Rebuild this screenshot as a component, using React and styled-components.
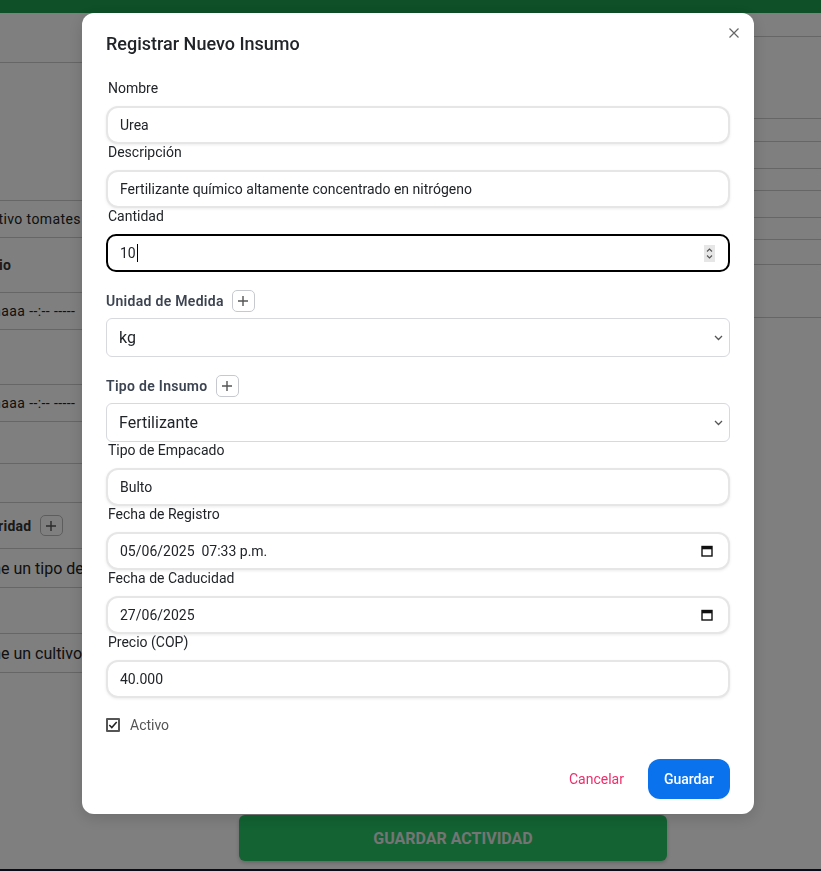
import React from "react";
import styled, { createGlobalStyle, css } from "styled-components";

const GlobalStyle = createGlobalStyle`
  html, body { margin: 0; padding: 0; }
  body {
    width: 821px;
    height: 871px;
    overflow: hidden;
    background: #ffffff;
    font-family: Roboto, "Liberation Sans", Arial, sans-serif;
  }
  * { box-sizing: border-box; }
`;

/* ---------- background page ---------- */
const BgPage = styled.div`
  display: flex;
  flex-direction: column;
  height: 871px;
  overflow: hidden;
`;
const TopBar = styled.div`
  flex: none;
  height: 13px;
  background: #1ea050;
`;
const Main = styled.div`
  flex: none;
  height: 802px;
  display: flex;
  justify-content: space-between;
`;
const BgColumn = styled.div`
  width: 360px;
  display: flex;
  flex-direction: column;
`;
const BgHeader = styled.div`
  height: 50px;
  border-bottom: 1px solid #cccccc;
  margin-bottom: ${(p) => p.$gap || 0}px;
`;
const BgInput = styled.div`
  height: ${(p) => p.$h || 38}px;
  margin-left: ${(p) => p.$shift}px;
  width: 420px;
  border: 1px solid #cccccc;
  border-radius: 4px;
  display: flex;
  align-items: center;
  padding: 0 12px;
  font-size: ${(p) => (p.$big ? 16 : 14)}px;
  letter-spacing: ${(p) => (p.$big ? 0 : 0.4)}px;
  color: #222;
  white-space: nowrap;
`;
const BgLabel = styled.div`
  height: ${(p) => p.$h}px;
  margin-left: ${(p) => p.$shift}px;
  display: flex;
  align-items: center;
  gap: 8px;
  font-size: 14px;
  font-weight: 700;
  letter-spacing: 0.3px;
  color: #333;
  white-space: nowrap;
`;
const BgPlus = styled.span`
  width: 23px;
  height: 21px;
  border: 1px solid #bbb;
  border-radius: 5px;
  display: flex;
  align-items: center;
  justify-content: center;
`;
const BgRow = styled.div`
  height: ${(p) => p.$h}px;
  border-bottom: 1px solid #cccccc;
`;
const BgFooter = styled.div`
  flex: none;
  padding-left: 239px;
`;
const BgButton = styled.div`
  width: 428px;
  height: 46px;
  border-radius: 6px;
  background: #26c666;
  color: #eaeaea;
  font-size: 16px;
  font-weight: 700;
  display: flex;
  align-items: center;
  justify-content: center;
  box-shadow: 0 2px 4px rgba(0, 0, 0, 0.2);
`;
const BgBottom = styled.div`
  margin-top: 8px;
  flex: 1;
  background: #141432;
`;

/* ---------- modal ---------- */
const Overlay = styled.div`
  position: fixed;
  inset: 0;
  background: rgba(0, 0, 0, 0.5);
  display: flex;
  align-items: flex-start;
  padding: 13px 0 0 82px;
`;
const Modal = styled.div`
  width: 672px;
  height: 801px;
  background: #ffffff;
  border-radius: 12px;
  display: flex;
  flex-direction: column;
  box-shadow: 0 4px 16px rgba(0, 0, 0, 0.15);
`;
const Header = styled.div`
  display: flex;
  justify-content: space-between;
  align-items: flex-start;
  padding: 10px 10px 0 24px;
`;
const Title = styled.h2`
  margin: 9px 0 0;
  font-size: 18px;
  line-height: 24px;
  font-weight: 500;
  color: #212529;
`;
const CloseButton = styled.button`
  width: 20px;
  height: 20px;
  padding: 0;
  border: none;
  background: transparent;
  display: flex;
  align-items: center;
  justify-content: center;
`;
const Body = styled.div`
  flex: 1;
  display: flex;
  flex-direction: column;
  padding: 24px 24px 15px;
`;
const Field = styled.div`
  display: flex;
  flex-direction: column;
  margin-top: ${(p) => p.$mt || 0}px;
`;
const Label = styled.label`
  font-size: 14px;
  line-height: 17px;
  margin: 0 0 9px 2px;
  color: #212529;
`;
const LabelRow = styled.div`
  display: flex;
  align-items: center;
  gap: 8px;
  height: 22px;
  margin-bottom: 6px;
`;
const StrongLabel = styled.label`
  font-size: 14px;
  font-weight: 600;
  letter-spacing: 0.3px;
  color: #3d4451;
`;
const AddButton = styled.button`
  width: 23px;
  height: 22px;
  padding: 0;
  border: 1px solid #c6cad0;
  border-radius: 5px;
  background: #fff;
  display: flex;
  align-items: center;
  justify-content: center;
`;
const InputShell = styled.div`
  height: 38px;
  display: flex;
  align-items: center;
  gap: 8px;
  padding: 0 ${(p) => p.$pr || 12}px 0 12px;
  border: 2px solid #e6e6e6;
  border-radius: 12px;
  box-shadow: 0 1px 3px rgba(0, 0, 0, 0.08);
  background: #fff;
  ${(p) =>
    p.$focused &&
    css`
      border-color: #000;
      border-radius: 10px;
      box-shadow: none;
    `}
`;
const TextInput = styled.input`
  flex: 1;
  min-width: 0;
  border: none;
  outline: none;
  padding: 0;
  background: transparent;
  font-family: inherit;
  font-size: 14px;
  color: #212529;
`;
const TypedValue = styled.span`
  flex: 1;
  display: flex;
  align-items: center;
  font-size: 14px;
  color: #212529;
`;
const Caret = styled.span`
  width: 1px;
  height: 18px;
  background: #000;
  margin-left: 1px;
`;
const SelectShell = styled.div`
  height: 39px;
  display: flex;
  align-items: center;
  padding: 0 6px 0 12px;
  border: 1px solid #d6d9de;
  border-radius: 6px;
  background: #fff;
`;
const Select = styled.select`
  flex: 1;
  appearance: none;
  border: none;
  outline: none;
  padding: 0;
  background: transparent;
  font-family: inherit;
  font-size: 16px;
  color: #212529;
`;
const CheckRow = styled.label`
  display: flex;
  align-items: center;
  gap: 10px;
  margin-top: 20px;
  font-size: 14px;
  color: #555;
  line-height: 14px;
`;
const CheckBox = styled.span`
  width: 14px;
  height: 14px;
  border: 2px solid #555;
  border-radius: 1px;
  display: flex;
  align-items: center;
  justify-content: center;
`;
const Footer = styled.div`
  margin-top: auto;
  display: flex;
  justify-content: flex-end;
  align-items: center;
  gap: 24px;
`;
const CancelButton = styled.button`
  border: none;
  background: transparent;
  padding: 0;
  font-family: inherit;
  font-size: 14px;
  color: #ee2d6c;
`;
const SaveButton = styled.button`
  height: 40px;
  padding: 0 16px;
  border: none;
  border-radius: 12px;
  background: #0b72ee;
  color: #fff;
  font-family: inherit;
  font-size: 14px;
  font-weight: 500;
`;

/* ---------- icons ---------- */
const CloseIcon = () => (
  <svg width="10" height="10" viewBox="0 0 10 10">
    <path d="M0.5 0.5l9 9M9.5 0.5l-9 9" stroke="#666" strokeWidth="1.2" fill="none" />
  </svg>
);
const PlusIcon = () => (
  <svg width="10" height="10" viewBox="0 0 10 10">
    <path d="M5 0v10M0 5h10" stroke="#555" strokeWidth="1.4" fill="none" />
  </svg>
);
const Chevron = () => (
  <svg width="9" height="6" viewBox="0 0 9 6">
    <path d="M1 1l3.5 3.5L8 1" stroke="#555" strokeWidth="1.3" fill="none" />
  </svg>
);
const Spinner = () => (
  <svg width="11" height="17" viewBox="0 0 11 17">
    <rect width="11" height="17" fill="#e6e6e6" />
    <path d="M3 6.5l2.5-2.5L8 6.5" stroke="#555" strokeWidth="1.1" fill="none" />
    <path d="M3 10.5l2.5 2.5L8 10.5" stroke="#555" strokeWidth="1.1" fill="none" />
  </svg>
);
const CalendarIcon = () => (
  <svg width="12" height="12" viewBox="0 0 12 12">
    <rect x="1" y="1.5" width="10" height="9.5" fill="none" stroke="#111" strokeWidth="1.4" />
    <rect x="1" y="1.5" width="10" height="2.8" fill="#111" />
  </svg>
);
const CheckIcon = () => (
  <svg width="10" height="10" viewBox="0 0 10 10">
    <path d="M1.3 5l2.5 2.6L8.7 2" stroke="#222" strokeWidth="1.5" fill="none" />
  </svg>
);

const Background = () => (
  <BgPage>
    <TopBar />
    <Main>
      <BgColumn>
        <BgHeader $gap={137} />
        <BgInput $shift={-36}>Cultivo tomates tipo chonto</BgInput>
        <BgLabel $h={54} $shift={-88}>Fecha de Inicio</BgLabel>
        <BgInput $shift={-74}>dd/mm/aaaa --:-- -----</BgInput>
        <BgLabel $h={54} $shift={-200}>Fecha Fin</BgLabel>
        <BgInput $shift={-74}>dd/mm/aaaa --:-- -----</BgInput>
        <BgLabel $h={41} $shift={-200}>Costo</BgLabel>
        <BgInput $h={40} $shift={-300}>0</BgInput>
        <BgLabel $h={45} $shift={-29}>
          Prioridad
          <BgPlus>
            <PlusIcon />
          </BgPlus>
        </BgLabel>
        <BgInput $h={40} $big $shift={-81}>Seleccione un tipo de actividad</BgInput>
        <BgLabel $h={45} $shift={-200}>Cultivo</BgLabel>
        <BgInput $h={40} $big $shift={-81}>Seleccione un cultivo</BgInput>
      </BgColumn>
      <BgColumn>
        <BgRow $h={24} />
        <BgRow $h={82} />
        <BgRow $h={23} />
        <BgRow $h={27} />
        <BgRow $h={22} />
        <BgRow $h={27} />
        <BgRow $h={22} />
        <BgRow $h={25} />
        <BgRow $h={53} />
      </BgColumn>
    </Main>
    <BgFooter>
      <BgButton>GUARDAR ACTIVIDAD</BgButton>
    </BgFooter>
    <BgBottom />
  </BgPage>
);

const TextField = ({ label, value, icon, pr }) => (
  <Field>
    <Label>{label}</Label>
    <InputShell $pr={pr}>
      <TextInput readOnly value={value} />
      {icon}
    </InputShell>
  </Field>
);

const SelectField = ({ label, value, mt }) => (
  <Field $mt={mt}>
    <LabelRow>
      <StrongLabel>{label}</StrongLabel>
      <AddButton aria-label="Agregar">
        <PlusIcon />
      </AddButton>
    </LabelRow>
    <SelectShell>
      <Select value={value} onChange={() => {}}>
        <option value={value}>{value}</option>
      </Select>
      <Chevron />
    </SelectShell>
  </Field>
);

export default function App() {
  return (
    <>
      <GlobalStyle />
      <Background />
      <Overlay>
        <Modal>
          <Header>
            <Title>Registrar Nuevo Insumo</Title>
            <CloseButton aria-label="Cerrar">
              <CloseIcon />
            </CloseButton>
          </Header>
          <Body>
            <TextField label="Nombre" value="Urea" />
            <TextField label="Descripción" value="Fertilizante químico altamente concentrado en nitrógeno" />
            <Field>
              <Label>Cantidad</Label>
              <InputShell $focused $pr={13}>
                <TypedValue>
                  10
                  <Caret />
                </TypedValue>
                <Spinner />
              </InputShell>
            </Field>
            <SelectField label="Unidad de Medida" value="kg" mt={18} />
            <SelectField label="Tipo de Insumo" value="Fertilizante" mt={18} />
            <TextField label="Tipo de Empacado" value="Bulto" />
            <TextField label="Fecha de Registro" value="05/06/2025  07:33 p.m." icon={<CalendarIcon />} pr={15} />
            <TextField label="Fecha de Caducidad" value="27/06/2025" icon={<CalendarIcon />} pr={15} />
            <TextField label="Precio (COP)" value="40.000" />
            <CheckRow>
              <CheckBox>
                <CheckIcon />
              </CheckBox>
              Activo
            </CheckRow>
            <Footer>
              <CancelButton>Cancelar</CancelButton>
              <SaveButton>Guardar</SaveButton>
            </Footer>
          </Body>
        </Modal>
      </Overlay>
    </>
  );
}
